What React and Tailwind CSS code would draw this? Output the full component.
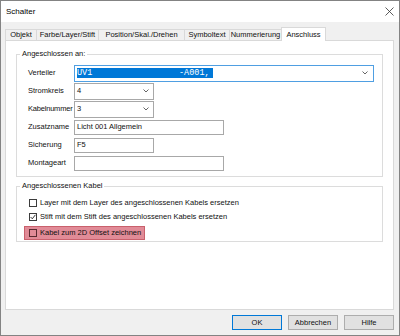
import React from 'react'

const tabs = [
  { label: 'Objekt', w: 'w-[31px]' },
  { label: 'Farbe/Layer/Stift', w: 'w-[62px]' },
  { label: 'Position/Skal./Drehen', w: 'w-[86px]' },
  { label: 'Symboltext', w: 'w-[45px]' },
  { label: 'Nummerierung', w: 'w-[52px]' },
]

function Chevron() {
  return (
    <svg width="6" height="4" viewBox="0 0 6 4" className="shrink-0">
      <path d="M0.5 0.5 L3 3 L5.5 0.5" fill="none" stroke="#555" strokeWidth="0.9" />
    </svg>
  )
}

function Row({ label, tight, children }) {
  return (
    <div className="flex items-center h-[18px]">
      <span className={`w-[46px] whitespace-nowrap leading-none ${tight ? 'tracking-[-0.2px]' : ''}`}>{label}</span>
      {children}
    </div>
  )
}

function Combo({ value, w }) {
  return (
    <div className={`${w} h-[17px] border border-[#a8a8a8] bg-white flex items-center justify-between pl-[2px] pr-[4px]`}>
      <span className="leading-none">{value}</span>
      <Chevron />
    </div>
  )
}

function TextBox({ value, w }) {
  return (
    <div className={`${w} h-[15px] border border-[#a8a8a8] bg-white flex items-center pl-[2px]`}>
      <span className="leading-none">{value}</span>
    </div>
  )
}

function Check({ checked }) {
  return (
    <div className="w-[8px] h-[8px] border border-[#3c3c3c] bg-white shrink-0 flex items-center justify-center">
      {checked && (
        <svg width="6" height="6" viewBox="0 0 6 6">
          <path d="M0.6 3 L2.3 4.8 L5.4 0.8" fill="none" stroke="#222" strokeWidth="0.9" />
        </svg>
      )}
    </div>
  )
}

function Group({ title, className, children }) {
  return (
    <div className={`relative border border-[#dcdcdc] ${className}`}>
      <span className="absolute -top-[6px] left-[3px] px-[2px] bg-white leading-[9px] whitespace-nowrap">{title}</span>
      {children}
    </div>
  )
}

export default function App() {
  return (
    <div
      className="w-[400px] h-[336px] border border-[#838383] bg-[#f0f0f0] flex flex-col text-[7.5px] text-[#111]"
      style={{ fontFamily: '"Liberation Sans", Arial, sans-serif' }}
    >
      {/* Title bar */}
      <div className="h-[21px] bg-white flex items-center justify-between pl-[5px] pr-[5px]">
        <span className="text-[8px] leading-none text-black">Schalter</span>
        <svg width="9" height="9" viewBox="0 0 9 9">
          <path d="M0.5 0.5 L8.5 8.5 M8.5 0.5 L0.5 8.5" stroke="#333" strokeWidth="0.8" />
        </svg>
      </div>

      {/* Tabs */}
      <div className="pl-[4px] pr-[5px] pt-[5px]">
        <div className="h-[13px] flex items-end">
          {tabs.map((t) => (
            <div
              key={t.label}
              className={`${t.w} h-[11px] border-t border-l border-[#d9d9d9] bg-[#f0f0f0] flex items-center justify-center whitespace-nowrap leading-none`}
            >
              {t.label}
            </div>
          ))}
          <div className="w-[45px] h-[14px] -mb-px relative z-10 border-t border-l border-r border-[#d9d9d9] bg-white flex justify-center pt-[3px] whitespace-nowrap leading-none">
            Anschluss
          </div>
        </div>

        {/* Panel */}
        <div className="h-[270px] border border-[#d9d9d9] bg-white px-[10px] pt-[13px]">
          <Group title="Angeschlossen an:" className="h-[123px] pl-[11px] pt-[9px]">
            <Row label="Verteiler">
              <div className="w-[300px] h-[17px] border border-[#4f9fe2] bg-white flex items-center justify-between pl-[2px] pr-[5px]">
                <span
                  className="bg-[#0078d7] text-white text-[8.5px] leading-[10px] h-[10px] whitespace-pre pr-[3px]"
                  style={{ fontFamily: '"Liberation Mono", "Courier New", monospace' }}
                >
                  {'UV1                 -A001,'}
                </span>
                <Chevron />
              </div>
            </Row>
            <Row label="Stromkreis">
              <Combo value="4" w="w-[80px]" />
            </Row>
            <Row label="Kabelnummer" tight>
              <Combo value="3" w="w-[80px]" />
            </Row>
            <Row label="Zusatzname">
              <TextBox value="Licht 001 Allgemein" w="w-[150px]" />
            </Row>
            <Row label="Sicherung">
              <TextBox value="F5" w="w-[80px]" />
            </Row>
            <Row label="Montageart">
              <TextBox value="" w="w-[150px]" />
            </Row>
          </Group>

          <Group title="Angeschlossenen Kabel" className="mt-[9px] h-[56px] pl-[12px] pt-[9px]">
            <div className="h-[14px] flex items-center gap-[3px]">
              <Check />
              <span className="leading-none whitespace-nowrap">Layer mit dem Layer des angeschlossenen Kabels ersetzen</span>
            </div>
            <div className="h-[14px] flex items-center gap-[3px]">
              <Check checked />
              <span className="leading-none whitespace-nowrap">Stift mit dem Stift des angeschlossenen Kabels ersetzen</span>
            </div>
            <div className="mt-[2px] -ml-[5px] w-[121px] h-[14px] flex items-center gap-[3px] pl-[4px] border border-[#c9606c] bg-[rgba(196,24,48,0.5)]">
              <div className="w-[8px] h-[8px] border border-[#5a2a30] shrink-0" />
              <span className="leading-none whitespace-nowrap">Kabel zum 2D Offset zeichnen</span>
            </div>
          </Group>
        </div>
      </div>

      {/* Buttons */}
      <div className="flex justify-end gap-[6px] pt-[5px] pr-[5px]">
        <button className="w-[50px] h-[15px] border border-[#0078d7] bg-[#e1e1e1] leading-none">OK</button>
        <button className="w-[50px] h-[15px] border border-[#adadad] bg-[#e1e1e1] leading-none">Abbrechen</button>
        <button className="w-[50px] h-[15px] border border-[#adadad] bg-[#e1e1e1] leading-none">Hilfe</button>
      </div>
    </div>
  )
}
